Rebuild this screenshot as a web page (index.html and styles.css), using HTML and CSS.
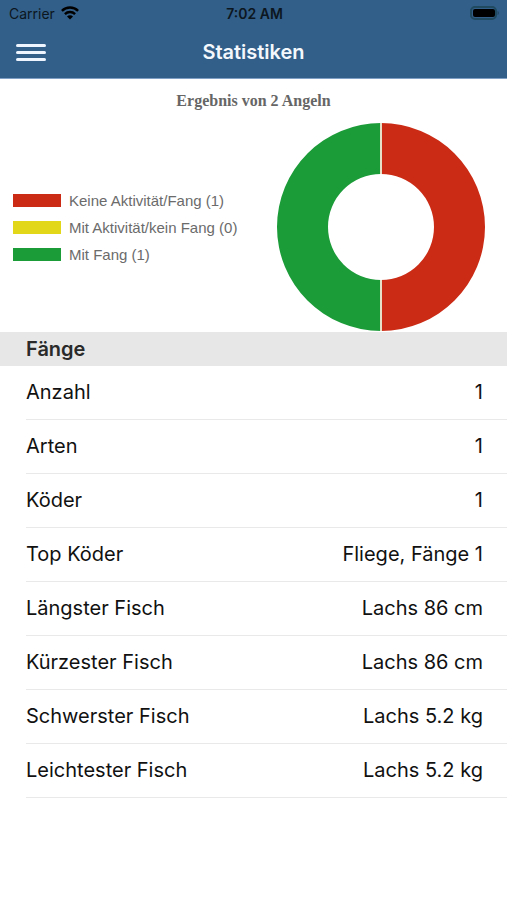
FILE: index.html
```
<!DOCTYPE html>
<html lang="de">
<head>
  <meta charset="UTF-8">
  <meta name="viewport" content="width=device-width,initial-scale=1.0">
  <title>Statistiken</title>
  <link rel="stylesheet" href="styles.css">
</head>
<body>
  <header class="app-header">
    <!-- Status bar -->
    <div class="status-bar">
      <div class="carrier">
        Carrier
        <svg class="wifi" viewBox="0 0 18 14" aria-hidden="true">
          <path d="M.9 4.900a11.500 11.500 0 0 1 16.200 0M3.900 8.100a7.200 7.200 0 0 1 10.200 0"/>
          <path class="dot" d="M9 13.600 6 10.600a4.200 4.200 0 0 1 6 0z"/>
        </svg>
      </div>
      <div class="time">7:02 AM</div>
      <svg class="battery" viewBox="0 0 30 14" aria-hidden="true">
        <rect class="shell" x="1" y="1" width="25" height="12" rx="4"/>
        <rect x="3" y="3" width="22" height="8" rx="2"/>
        <path class="tip" d="M27.500 5v4c2-.6 2-3.400 0-4z"/>
      </svg>
    </div>

    <!-- Navigation -->
    <div class="nav-bar">
      <button class="menu-button" type="button" aria-label="Menü">
        <span></span><span></span><span></span>
      </button>
      <h1>Statistiken</h1>
    </div>
  </header>

  <main>
    <section class="chart">
      <h2>Ergebnis von 2 Angeln</h2>
      <div class="chart-body">
        <ul class="legend">
          <li><span class="swatch red"></span>Keine Aktivität/Fang (1)</li>
          <li><span class="swatch yellow"></span>Mit Aktivität/kein Fang (0)</li>
          <li><span class="swatch green"></span>Mit Fang (1)</li>
        </ul>
        <svg class="donut" viewBox="0 0 208 208" role="img" aria-label="Keine Aktivität/Fang 1, Mit Fang 1">
          <path class="red" d="M104 0a104 104 0 0 1 0 208v-51a53 53 0 0 0 0-106z"/>
          <path class="green" d="M104 0a104 104 0 0 0 0 208v-51a53 53 0 0 1 0-106z"/>
          <path class="divider" d="M104 0v51M104 157v51"/>
        </svg>
      </div>
    </section>

    <section class="catches">
      <h2>Fänge</h2>
      <dl>
        <div class="row"><dt>Anzahl</dt><dd>1</dd></div>
        <div class="row"><dt>Arten</dt><dd>1</dd></div>
        <div class="row"><dt>Köder</dt><dd>1</dd></div>
        <div class="row"><dt>Top Köder</dt><dd>Fliege, Fänge 1</dd></div>
        <div class="row"><dt>Längster Fisch</dt><dd>Lachs 86 cm</dd></div>
        <div class="row"><dt>Kürzester Fisch</dt><dd>Lachs 86 cm</dd></div>
        <div class="row"><dt>Schwerster Fisch</dt><dd>Lachs 5.2 kg</dd></div>
        <div class="row"><dt>Leichtester Fisch</dt><dd>Lachs 5.2 kg</dd></div>
      </dl>
    </section>
  </main>
</body>
</html>
```
FILE: styles.css
```
* { margin:0; padding:0; box-sizing:border-box; }
body {
  background:#fff;
  color:#111;
  font-family:Inter, "Liberation Sans", sans-serif;
}

/* Header */
.app-header {
  background:#325f89;
  border-bottom:1px solid #7f9fc4;
}
.status-bar {
  display:grid;
  grid-template-columns:1fr auto 1fr;
  align-items:center;
  height:26px;
  padding:0 7px 0 9px;
  color:#0c1620;
  font-size:14px;
}
.carrier { display:flex; align-items:center; gap:6px; }
.wifi { width:18px; height:14px; fill:none; stroke:#000; stroke-width:2.4; }
.wifi .dot { fill:#000; stroke:none; }
.time { font-weight:600; }
.battery { width:30px; height:14px; justify-self:end; }
.battery .shell { fill:none; stroke:#204a60; stroke-width:2; }
.battery .tip { fill:#254b66; }

.nav-bar {
  display:grid;
  grid-template-columns:1fr auto 1fr;
  align-items:center;
  height:52px;
  padding:0 16px;
}
.menu-button {
  display:flex; flex-direction:column; gap:4px;
  width:30px;
  border:0; background:none; cursor:pointer;
}
.menu-button span {
  width:100%; height:3px;
  border-radius:2px;
  background:#eef5ff;
}
.nav-bar h1 {
  color:#f4f8fd;
  font-size:20px; font-weight:600;
}

/* Chart */
.chart { padding-top:12px; }
.chart h2 {
  color:#666;
  font:bold 16px/20px "Liberation Serif", serif;
  text-align:center;
}
.chart-body {
  display:flex; align-items:center; justify-content:space-between;
  padding:12px 22px 1px 13px;
}
.legend {
  list-style:none;
  color:#6b6b6b;
  font:15px/27px "Liberation Sans", sans-serif;
}
.legend li { display:flex; align-items:center; gap:8px; }
.swatch { width:48px; height:13px; }
.swatch.red { background:#cb2b15; }
.swatch.yellow { background:#e2d718; }
.swatch.green { background:#1c9b39; }
.donut { width:208px; height:208px; flex:none; }
.donut .red { fill:#cb2b15; }
.donut .green { fill:#1c9b39; }
.donut .divider { stroke:#e6e0c8; stroke-width:2; }

/* Catch list */
.catches h2 {
  padding:0 26px;
  background:#e7e7e7;
  color:#2a2a2a;
  font-size:20px; font-weight:600; line-height:34px;
}
.row {
  display:flex; justify-content:space-between;
  margin-left:26px; padding-right:24px;
  border-bottom:1px solid #e9e9e9;
  font-size:20px; line-height:53px;
}
```
